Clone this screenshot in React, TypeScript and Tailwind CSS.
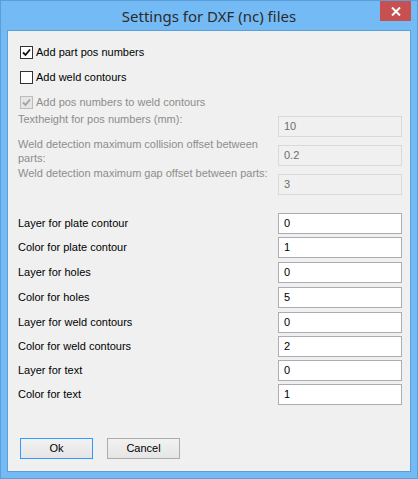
import React from "react";

const font = { fontFamily: '"Liberation Sans", Arial, sans-serif' };

function Check({ checked, disabled }: { checked: boolean; disabled?: boolean }) {
  return (
    <span
      className={
        "w-[13px] h-[13px] shrink-0 border flex items-center justify-center " +
        (disabled ? "border-[#bcbcbc] bg-[#e6e6e6]" : "border-[#333333] bg-white")
      }
    >
      {checked && (
        <svg width="9" height="9" viewBox="0 0 9 9">
          <path
            d="M1 4.5 L3.5 7 L8 1.5"
            fill="none"
            stroke={disabled ? "#a0a0a0" : "#111"}
            strokeWidth="1.8"
          />
        </svg>
      )}
    </span>
  );
}

const fields = [
  { label: "Layer for plate contour", value: "0", mt: "mt-[0px]" },
  { label: "Color for plate contour", value: "1", mt: "mt-[3px]" },
  { label: "Layer for holes", value: "0", mt: "mt-[4px]" },
  { label: "Color for holes", value: "5", mt: "mt-[4px]" },
  { label: "Layer for weld contours", value: "0", mt: "mt-[4px]" },
  { label: "Color for weld contours", value: "2", mt: "mt-[3px]" },
  { label: "Layer for text", value: "0", mt: "mt-[3px]" },
  { label: "Color for text", value: "1", mt: "mt-[3px]" },
];

export default function App() {
  return (
    <div className="w-[418px] h-[479px] bg-[#74bbf5] border border-[#5a9fdc] flex flex-col" style={font}>
      {/* title bar */}
      <div className="relative h-[29px] shrink-0 flex items-center justify-center">
        <span
          className="text-[15px] text-[#2b2b2b] mt-[1px]"
          style={{ fontFamily: '"Noto Sans", "Open Sans", sans-serif' }}
        >
          Settings for DXF (nc) files
        </span>
        <div className="absolute top-0 right-[6px] w-[31px] h-[20px] bg-[#c75050] flex items-center justify-center">
          <svg width="10" height="9" viewBox="0 0 10 9">
            <path d="M1 0.5 L9 8.5 M9 0.5 L1 8.5" stroke="#fff" strokeWidth="2" />
          </svg>
        </div>
      </div>

      {/* client */}
      <div className="mx-[6px] h-[442px] border border-[#5c9ed6] bg-[#f0f0f0] text-[11px] text-black">
        {/* checkboxes */}
        <div className="pt-[9px] pl-[12px]">
          <div className="h-[25px] flex items-center gap-[3px]">
            <Check checked />
            <span>Add part pos numbers</span>
          </div>
          <div className="h-[25px] flex items-center gap-[3px]">
            <Check checked={false} />
            <span>Add weld contours</span>
          </div>
          <div className="h-[25px] flex items-center gap-[3px] text-[#8d8d8d]">
            <Check checked disabled />
            <span>Add pos numbers to weld contours</span>
          </div>
        </div>

        {/* disabled weld settings */}
        <div className="-mt-[3px] pl-[10px] pr-[8px] text-[#8d8d8d]">
          <div className="h-[29px] flex items-start justify-between">
            <span className="leading-[14px] w-[250px]">Textheight for pos numbers (mm):</span>
            <div className="mt-[4px] w-[124px] h-[21px] border border-[#d9d9d9] bg-[#f0f0f0] flex items-center pl-[5px] text-[#6d6d6d]">
              10
            </div>
          </div>
          <div className="h-[29px] flex items-start justify-between">
            <span className="-mt-[4px] leading-[14px] w-[250px]">
              Weld detection maximum collision offset between parts:
            </span>
            <div className="mt-[4px] w-[124px] h-[21px] border border-[#d9d9d9] bg-[#f0f0f0] flex items-center pl-[5px] text-[#6d6d6d]">
              0.2
            </div>
          </div>
          <div className="h-[29px] flex items-start justify-between">
            <span className="-mt-[4px] leading-[14px] w-[255px]">
              Weld detection maximum gap offset between parts:
            </span>
            <div className="mt-[4px] w-[124px] h-[21px] border border-[#d9d9d9] bg-[#f0f0f0] flex items-center pl-[5px] text-[#6d6d6d]">
              3
            </div>
          </div>
        </div>

        {/* layer / color fields */}
        <div className="mt-[14px] pl-[10px] pr-[8px] flex flex-col">
          {fields.map((f) => (
            <div key={f.label + f.value} className={"h-[21px] flex items-center justify-between " + f.mt}>
              <span className="-mt-[1px]">{f.label}</span>
              <div className="w-[124px] h-[21px] border border-[#abadb3] bg-white flex items-center pl-[5px]">
                {f.value}
              </div>
            </div>
          ))}
        </div>

        {/* buttons */}
        <div className="mt-[33px] pl-[12px] flex gap-[14px]">
          <button className="w-[73px] h-[21px] border border-[#3399ff] bg-gradient-to-b from-[#f2f2f2] to-[#e5e5e5] text-[11px] text-black">
            Ok
          </button>
          <button className="w-[73px] h-[21px] border border-[#acacac] bg-gradient-to-b from-[#f2f2f2] to-[#e5e5e5] text-[11px] text-black">
            Cancel
          </button>
        </div>
      </div>
    </div>
  );
}
